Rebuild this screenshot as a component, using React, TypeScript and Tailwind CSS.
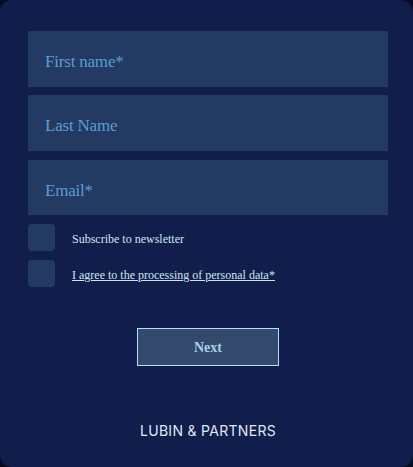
export default function App() {
  const serif = { fontFamily: '"Liberation Serif", serif' } as React.CSSProperties;
  return (
    <div className="w-[413px] h-[467px] bg-[#070b1f]">
      <div className="w-[413px] h-[467px] rounded-[12px] bg-[#111d4b] pl-[28px] pr-[25px] pt-[31px] flex flex-col">
        <div className="flex flex-col">
          <div className="h-[56px] bg-[#233a63] flex items-center pl-[17px] pt-[6px]">
            <span className="text-[17px] text-[#5d9dcf] tracking-[-0.2px]" style={serif}>First name*</span>
          </div>
          <div className="h-[56px] mt-[8px] bg-[#233a63] flex items-center pl-[17px] pt-[6px]">
            <span className="text-[17px] text-[#5d9dcf] tracking-[-0.2px]" style={serif}>Last Name</span>
          </div>
          <div className="h-[55px] mt-[9px] bg-[#233a63] flex items-center pl-[17px] pt-[6px]">
            <span className="text-[17px] text-[#5d9dcf] tracking-[-0.2px]" style={serif}>Email*</span>
          </div>
        </div>
        <div className="flex flex-col gap-[9px] mt-[9px]">
          <div className="flex items-center gap-[17px]">
            <div className="w-[27px] h-[27px] rounded-[4px] bg-[#233a63]" />
            <span className="text-[12px] text-[#cde6f2] pt-[2px]" style={serif}>Subscribe to newsletter</span>
          </div>
          <div className="flex items-center gap-[17px]">
            <div className="w-[27px] h-[27px] rounded-[4px] bg-[#233a63]" />
            <span className="text-[12px] text-[#cde6f2] underline pt-[2px]" style={serif}>I agree to the processing of personal data*</span>
          </div>
        </div>
        <div className="flex justify-center mt-[41px]">
          <button className="w-[142px] h-[38px] border border-[#b8e0f5] bg-[#34496e] text-[#a9d0e6] text-[14px] font-semibold" style={serif}>Next</button>
        </div>
        <div className="flex justify-center mt-[54px]">
          <span className="text-[14px] text-[#e0e7f6] tracking-[0.3px]" style={{ fontFamily: 'Inter, sans-serif' }}>LUBIN &amp; PARTNERS</span>
        </div>
      </div>
    </div>
  );
}
